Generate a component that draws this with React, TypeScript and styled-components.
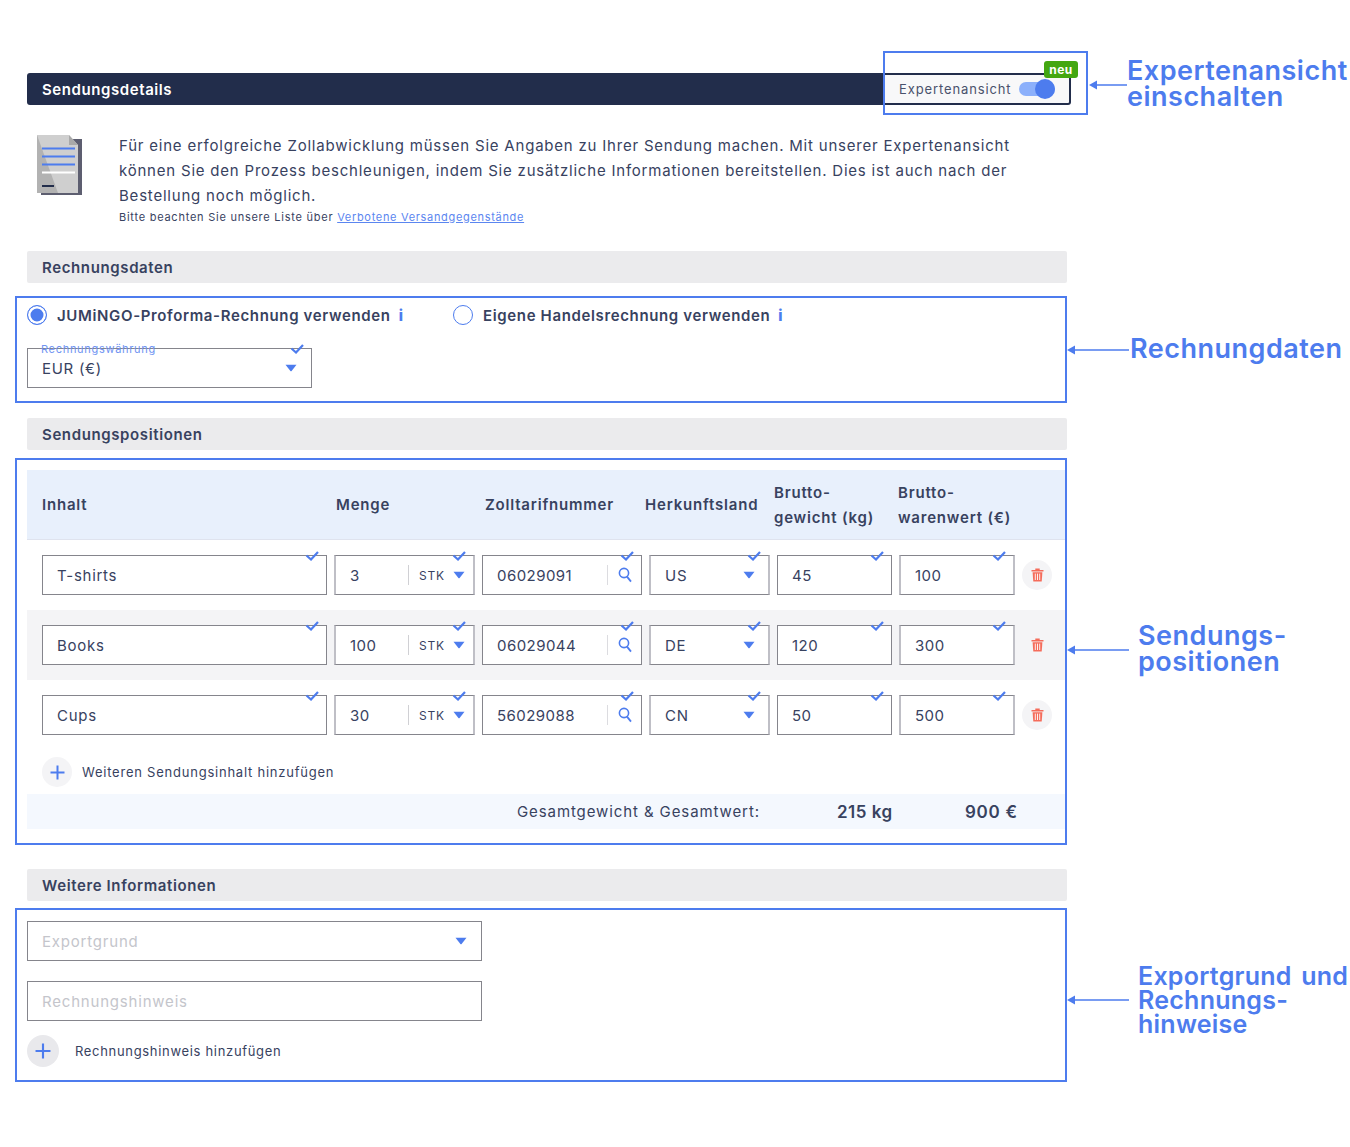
import React from 'react';
import styled, {createGlobalStyle} from 'styled-components';

const blue = '#4d7cee';
const navy = '#222d4b';
const text = '#38425f';

const GlobalStyle = createGlobalStyle`
  html, body {
    margin: 0;
    padding: 0;
    background: #fff;
  }
  body {
    font-family: Inter, "Open Sans", "Liberation Sans", sans-serif;
    color: ${text};
  }
`;

const Check = () => (
    <CheckMark viewBox="0 0 14 10">
        <path d="M1.5 4.5 L6 8.5 L13 1" fill="none" stroke={blue} strokeWidth="2.2" />
    </CheckMark>
);

const Caret = () => (
    <CaretMark viewBox="0 0 12 8">
        <path d="M0.5 0.8 H11.5 L6.6 7 Q6 7.6 5.4 7 Z" fill={blue} />
    </CaretMark>
);

const SearchIcon = () => (
    <svg width="14" height="16" viewBox="0 0 14 16">
        <circle cx="6" cy="6" r="4.6" fill="none" stroke={blue} strokeWidth="1.6" />
        <path d="M9 9.6 L13 14.6" stroke={blue} strokeWidth="1.8" />
    </svg>
);

const TrashIcon = () => (
    <svg width="13" height="14" viewBox="0 0 13 14">
        <path d="M0.5 2 H4.3 V0.6 H8.7 V2 H12.5 V3.4 H0.5 Z" fill="#f56c5b" />
        <path d="M1.6 4.2 H11.4 L10.7 13.4 H2.3 Z" fill="#f56c5b" />
        <path d="M4.3 5.6 V12 M6.5 5.6 V12 M8.7 5.6 V12" stroke="#fff" strokeWidth="0.9" />
    </svg>
);

const Plus = ({size = 15}: {size?: number}) => (
    <svg width={size} height={size} viewBox="0 0 15 15">
        <path d="M7.5 0.5 V14.5 M0.5 7.5 H14.5" stroke={blue} strokeWidth="2" />
    </svg>
);

const DocIcon = () => (
    <DocSvg viewBox="0 0 45 60">
        <path d="M4 4 H45 V60 H4 Z" fill="#5d5e70" />
        <path d="M0 0 H32 L41 10 V58 H0 Z" fill="#cfcfcf" />
        <path d="M0 0 L21 58 H0 Z" fill="#b2b2b2" />
        <path d="M32 0 L41 10 H32 Z" fill="#a9a9a9" />
        <path d="M5 13.5 H38 M5 21.5 H38 M5 29.5 H38" stroke={blue} strokeWidth="2" />
        <path d="M5 37.5 H38" stroke="#fff" strokeWidth="2" />
        <path d="M5 51 H17" stroke={navy} strokeWidth="2" />
    </DocSvg>
);

type CalloutProps = {
    lines: string[];
    width: number;
    gap: number;
    shift: number;
    small?: boolean;
};

const Callout = ({lines, width, gap, shift, small}: CalloutProps) => (
    <CalloutWrap $shift={shift}>
        <svg width={width} height="10" viewBox={`0 0 ${width} 10`}>
            <path d={`M0 5 L8 0.5 V4.2 H${width} V5.8 H8 V9.5 Z`} fill={blue} />
        </svg>
        <CalloutLabel $gap={gap} $small={small}>
            {lines.map(line => <div key={line}>{line}</div>)}
        </CalloutLabel>
    </CalloutWrap>
);

const rows = [
    {name: 'T-shirts', qty: '3', code: '06029091', land: 'US', weight: '45', value: '100'},
    {name: 'Books', qty: '100', code: '06029044', land: 'DE', weight: '120', value: '300'},
    {name: 'Cups', qty: '30', code: '56029088', land: 'CN', weight: '50', value: '500'},
];

export default function App() {
    return (
        <Page>
            <GlobalStyle />

            <HeaderRow>
                <HeaderBar>Sendungsdetails</HeaderBar>
                <ToggleBox>
                    Expertenansicht
                    <Toggle><Knob /></Toggle>
                    <NewBadge>neu</NewBadge>
                    <ToggleFrame />
                </ToggleBox>
                <Callout lines={['Expertenansicht', 'einschalten']} width={38} gap={0} shift={-8} />
            </HeaderRow>

            <Intro>
                <DocIcon />
                <IntroText>
                    <p>
                        Für eine erfolgreiche Zollabwicklung müssen Sie Angaben zu Ihrer Sendung machen. Mit unserer Expertenansicht<br />
                        können Sie den Prozess beschleunigen, indem Sie zusätzliche Informationen bereitstellen. Dies ist auch nach der<br />
                        Bestellung noch möglich.
                    </p>
                    <small>Bitte beachten Sie unsere Liste über <a href="#verboten">Verbotene Versandgegenstände</a></small>
                </IntroText>
            </Intro>

            <SectionTitle $top={27}>Rechnungsdaten</SectionTitle>
            <SectionRow $top={13}>
                <Frame $height={107}>
                    <RadioRow>
                        <RadioLabel $width={426}>
                            <Radio $on />
                            JUMiNGO-Proforma-Rechnung verwenden
                            <Info>i</Info>
                        </RadioLabel>
                        <RadioLabel>
                            <Radio />
                            Eigene Handelsrechnung verwenden
                            <Info>i</Info>
                        </RadioLabel>
                    </RadioRow>
                    <Field $width={285} $top={16}>
                        <FloatLabel>Rechnungswährung</FloatLabel>
                        <FieldText>EUR (€)</FieldText>
                        <Caret />
                        <Check />
                    </Field>
                </Frame>
                <Callout lines={['Rechnungdaten']} width={62} gap={1} shift={0} />
            </SectionRow>

            <SectionTitle $top={15}>Sendungspositionen</SectionTitle>
            <SectionRow $top={8}>
                <Frame $height={387}>
                    <TableHead>
                        <div>Inhalt</div>
                        <div>Menge</div>
                        <div>Zolltarifnummer</div>
                        <div>Herkunftsland</div>
                        <div>Brutto-<br />gewicht (kg)</div>
                        <div>Brutto-<br />warenwert (€)</div>
                    </TableHead>

                    {rows.map((row, idx) => (
                        <TableRow key={row.name} $alt={idx === 1}>
                            <Field><FieldText>{row.name}</FieldText><Check /></Field>
                            <Field $inset $right={8}>
                                <FieldText $num>{row.qty}</FieldText>
                                <Unit>STK</Unit>
                                <Caret />
                                <Check />
                            </Field>
                            <Field>
                                <FieldText $num>{row.code}</FieldText>
                                <SearchSlot><SearchIcon /></SearchSlot>
                                <Check />
                            </Field>
                            <Field $inset $right={13}>
                                <FieldText>{row.land}</FieldText>
                                <Caret />
                                <Check />
                            </Field>
                            <Field><FieldText $num>{row.weight}</FieldText><Check /></Field>
                            <Field $inset><FieldText $num>{row.value}</FieldText><Check /></Field>
                            <RoundButton><TrashIcon /></RoundButton>
                        </TableRow>
                    ))}

                    <AddRow>
                        <RoundButton><Plus /></RoundButton>
                        Weiteren Sendungsinhalt hinzufügen
                    </AddRow>

                    <TotalBar>
                        <TotalLabel>Gesamtgewicht &amp; Gesamtwert:</TotalLabel>
                        <TotalWeight>215 kg</TotalWeight>
                        <TotalValue>900 €</TotalValue>
                    </TotalBar>
                </Frame>
                <Callout lines={['Sendungs-', 'positionen']} width={62} gap={9} shift={-3} />
            </SectionRow>

            <SectionTitle $top={24}>Weitere Informationen</SectionTitle>
            <SectionRow $top={7}>
                <Frame $height={174}>
                    <Field $width={455} $top={11}>
                        <FieldText $muted>Exportgrund</FieldText>
                        <Caret />
                    </Field>
                    <Field $width={455} $top={20}>
                        <FieldText $muted>Rechnungshinweis</FieldText>
                    </Field>
                    <AddNote>
                        <RoundButton $big><Plus size={16} /></RoundButton>
                        Rechnungshinweis hinzufügen
                    </AddNote>
                </Frame>
                <Callout lines={['Exportgrund und', 'Rechnungs-', 'hinweise']} width={62} gap={9} shift={9} small />
            </SectionRow>
        </Page>
    );
}

const Page = styled.div`
  box-sizing: border-box;
  width: 1350px;
  height: 1147px;
  padding: 73px 0 0 15px;
  overflow: hidden;
  font-size: 15px;
`;

const HeaderRow = styled.div`
  display: flex;
  align-items: stretch;
  height: 32px;
  margin-left: 12px;
`;

const HeaderBar = styled.div`
  box-sizing: border-box;
  width: 858px;
  padding-left: 15px;
  display: flex;
  align-items: center;
  background: ${navy};
  border-radius: 3px 0 0 3px;
  color: #fff;
  font-weight: 600;
  font-size: 15px;
  letter-spacing: 0.58px;
`;

const ToggleBox = styled.div`
  position: relative;
  box-sizing: border-box;
  width: 186px;
  padding-left: 14px;
  display: flex;
  align-items: center;
  gap: 7px;
  background: #f8f8f9;
  border: 2px solid ${navy};
  border-left: 0;
  border-radius: 0 0 3px 0;
  font-size: 13px;
  letter-spacing: 0.88px;
  color: #4a526c;
`;

const Toggle = styled.span`
  position: relative;
  width: 36px;
  height: 14px;
  border-radius: 7px;
  background: #8cb0fb;
`;

const Knob = styled.span`
  position: absolute;
  right: 0;
  top: -3px;
  width: 20px;
  height: 20px;
  border-radius: 50%;
  background: ${blue};
`;

const NewBadge = styled.span`
  position: absolute;
  left: 159px;
  top: -14px;
  width: 34px;
  height: 17px;
  display: flex;
  align-items: center;
  justify-content: center;
  border-radius: 3px;
  background: #43a711;
  color: #fff;
  font-size: 12px;
  font-weight: 700;
  letter-spacing: 0.5px;
`;

const ToggleFrame = styled.span`
  position: absolute;
  left: -2px;
  top: -24px;
  width: 201px;
  height: 60px;
  border: 2px solid ${blue};
  pointer-events: none;
`;

const CalloutWrap = styled.div<{$shift: number}>`
  display: flex;
  align-items: center;
  align-self: center;
  margin-top: ${p => p.$shift}px;
  height: 0;
  flex: none;
  ${HeaderRow} & {
    margin-left: 18px;
  }
`;

const CalloutLabel = styled.div<{$gap: number; $small?: boolean}>`
  margin-left: ${p => p.$gap}px;
  margin-top: ${p => (p.$small ? 0 : -2)}px;
  color: ${blue};
  font-size: ${p => (p.$small ? 25 : 27)}px;
  line-height: ${p => (p.$small ? 24 : 26)}px;
  letter-spacing: ${p => (p.$small ? 0.25 : 0.5)}px;
  word-spacing: ${p => (p.$small ? 3 : 0)}px;
  font-weight: 600;
  white-space: nowrap;
`;

const Intro = styled.div`
  display: flex;
  margin: 31px 0 0 22px;
`;

const DocSvg = styled.svg`
  width: 45px;
  height: 60px;
  margin-top: -1px;
  flex: none;
`;

const IntroText = styled.div`
  margin: -3px 0 0 37px;
  width: 910px;
  white-space: nowrap;

  p {
    margin: 0;
    font-size: 15px;
    line-height: 25.2px;
    letter-spacing: 0.79px;
  }

  small {
    display: block;
    margin-top: 1.6px;
    font-size: 11px;
    line-height: 14px;
    letter-spacing: 0.75px;
  }

  a {
    color: #5b86f0;
    letter-spacing: 0.68px;
  }
`;

const SectionTitle = styled.div<{$top: number}>`
  box-sizing: border-box;
  width: 1040px;
  height: 32px;
  margin: ${p => p.$top}px 0 0 12px;
  padding-left: 15px;
  display: flex;
  align-items: center;
  background: #ebebed;
  border-radius: 2px;
  font-weight: 600;
  font-size: 15px;
  letter-spacing: 0.62px;
`;

const SectionRow = styled.div<{$top: number}>`
  display: flex;
  margin-top: ${p => p.$top}px;
`;

const Frame = styled.div<{$height: number}>`
  box-sizing: border-box;
  width: 1052px;
  height: ${p => p.$height}px;
  padding: 0 0 0 10px;
  border: 2px solid ${blue};
  flex: none;
`;

const RadioRow = styled.div`
  display: flex;
  height: 34px;
  align-items: center;
`;

const RadioLabel = styled.label<{$width?: number}>`
  display: flex;
  align-items: center;
  width: ${p => (p.$width ? `${p.$width}px` : 'auto')};
  font-weight: 600;
  font-size: 15px;
  letter-spacing: 0.64px;
`;

const Radio = styled.span<{$on?: boolean}>`
  box-sizing: border-box;
  width: 20px;
  height: 20px;
  margin-right: 10px;
  border-radius: 50%;
  border: 1.5px solid ${blue};
  background: ${p => (p.$on ? blue : '#fff')};
  box-shadow: ${p => (p.$on ? 'inset 0 0 0 2.5px #fff' : 'none')};
`;

const Info = styled.span`
  margin-left: 8px;
  color: ${blue};
  font-weight: 800;
`;

const Field = styled.div<{$width?: number; $top?: number; $inset?: boolean; $right?: number}>`
  position: relative;
  box-sizing: border-box;
  width: ${p => (p.$width ? `${p.$width}px` : 'auto')};
  height: 40px;
  margin-top: ${p => p.$top ?? 0}px;
  padding: 0 ${p => p.$right ?? 14}px 0 14px;
  display: flex;
  align-items: center;
  background: #fff;
  border: 1px solid #85858c;
  border-left: ${p => (p.$inset ? '2px solid #bfbfc6' : '1px solid #85858c')};
  border-right: ${p => (p.$inset ? '2px solid #bfbfc6' : '1px solid #85858c')};
`;

const FieldText = styled.span<{$muted?: boolean; $num?: boolean}>`
  flex: 1;
  font-size: 15px;
  letter-spacing: ${p => (p.$muted ? 0.8 : p.$num ? 0.45 : 0.72)}px;
  color: ${p => (p.$muted ? '#c4c5cb' : text)};
`;

const FloatLabel = styled.span`
  position: absolute;
  left: 13px;
  top: -7px;
  font-size: 11px;
  letter-spacing: 0.7px;
  color: #7094f2;
`;

const CheckMark = styled.svg`
  position: absolute;
  right: 7px;
  top: -5px;
  width: 14px;
  height: 10px;
`;

const CaretMark = styled.svg`
  width: 12px;
  height: 8px;
  flex: none;
`;

const Unit = styled.span`
  height: 20px;
  padding: 0 8px 0 10px;
  display: flex;
  align-items: center;
  border-left: 1px solid #d0d0d4;
  font-size: 12px;
  letter-spacing: 0.8px;
`;

const SearchSlot = styled.span`
  height: 20px;
  padding-left: 10px;
  margin-right: -5px;
  display: flex;
  align-items: center;
  border-left: 1px solid #dcdce0;
`;

const TableHead = styled.div`
  box-sizing: border-box;
  width: 1038px;
  height: 70px;
  margin-top: 10px;
  padding-left: 15px;
  display: grid;
  grid-template-columns: 294px 149px 160px 129px 124px 1fr;
  align-items: center;
  background: #e8f0fc;
  border-bottom: 1px solid #dfe3ee;
  font-weight: 600;
  font-size: 15px;
  line-height: 25px;
  letter-spacing: 0.8px;
`;

const TableRow = styled.div<{$alt?: boolean}>`
  box-sizing: border-box;
  width: 1038px;
  height: 70px;
  padding-left: 15px;
  display: grid;
  grid-template-columns: 285px 141px 160px 121px 115px 116px 30px;
  column-gap: 7px;
  align-items: center;
  background: ${p => (p.$alt ? '#f4f4f6' : '#fff')};
`;

const RoundButton = styled.span<{$big?: boolean}>`
  width: ${p => (p.$big ? 32 : 30)}px;
  height: ${p => (p.$big ? 32 : 30)}px;
  flex: none;
  display: flex;
  align-items: center;
  justify-content: center;
  border-radius: 50%;
  background: ${p => (p.$big ? '#e9e9ec' : '#f4f4f6')};
`;

const AddRow = styled.div`
  height: 44px;
  padding-left: 15px;
  display: flex;
  align-items: center;
  gap: 10px;
  font-size: 13px;
  letter-spacing: 0.77px;
`;

const AddNote = styled.div`
  margin-top: 14px;
  height: 32px;
  display: flex;
  align-items: center;
  gap: 16px;
  font-size: 13px;
  letter-spacing: 0.68px;
`;

const TotalBar = styled.div`
  width: 1038px;
  height: 35px;
  display: flex;
  align-items: center;
  background: #f4f8fe;
`;

const TotalLabel = styled.span`
  margin-left: 490px;
  width: 320px;
  font-size: 15px;
  letter-spacing: 0.9px;
`;

const TotalWeight = styled.span`
  width: 128px;
  font-size: 17px;
  font-weight: 600;
  letter-spacing: 0.5px;
`;

const TotalValue = styled.span`
  font-size: 17px;
  font-weight: 600;
  letter-spacing: 0.7px;
`;
